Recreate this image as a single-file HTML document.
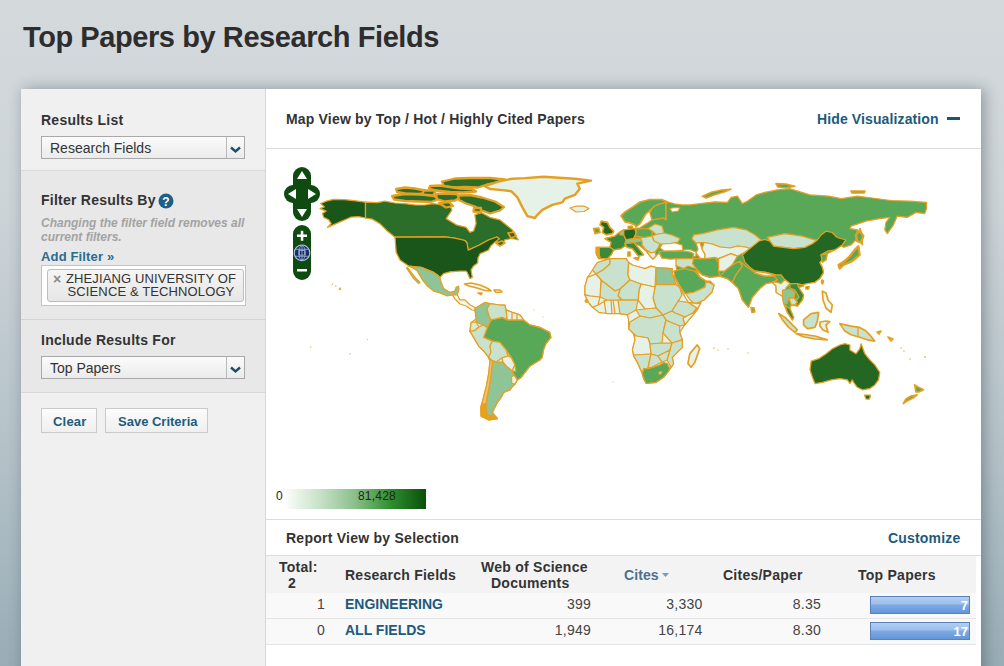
<!DOCTYPE html>
<html><head><meta charset="utf-8">
<style>
*{margin:0;padding:0;box-sizing:border-box}
html,body{width:1004px;height:666px;overflow:hidden}
body{font-family:"Liberation Sans",sans-serif;background:linear-gradient(to bottom,#d4d9dc 0px,#cdd4d8 200px,#b4c2c8 450px,#99adb6 666px);position:relative;color:#333}
.t{position:absolute;white-space:nowrap;line-height:1;margin-top:-1px}
h1{position:absolute;left:23px;top:19px;font-size:29px;letter-spacing:-0.42px;font-weight:bold;color:#2d2d2d;white-space:nowrap;line-height:36px}
#side{position:absolute;left:21px;top:89px;width:245px;height:600px;background:#f0f0f0;border-right:1px solid #d6d6d6}
#shadow{position:absolute;left:21px;top:89px;width:960px;height:620px;box-shadow:3px 0 14px rgba(30,45,55,0.38)}
#main{position:absolute;left:266px;top:89px;width:715px;height:600px;background:#fff}
.sec2{position:absolute;left:0;top:81px;width:244px;height:150px;background:#e8e8e8;border-top:1px solid #dadada}
.sec3{position:absolute;left:0;top:230px;width:244px;height:74px;background:#e8e8e8;border-top:1px solid #d4d4d4;border-bottom:1px solid #d8d8d8}
.lbl{font-size:14px;font-weight:bold;color:#333;letter-spacing:0.25px}
.sel{position:absolute;left:20px;width:204px;height:23px;border:1px solid #a9a9a9;background:linear-gradient(#fbfbfb,#ebebeb);font-size:14px;color:#333}
.sel span{position:absolute;left:8px;top:4px;line-height:1}
.sel i{position:absolute;right:0;top:0;width:18px;height:21px;border-left:1px solid #b9b9b9}
.btn{position:absolute;height:25px;border:1px solid #cacaca;background:linear-gradient(#fcfcfc,#efefef);font-size:13px;letter-spacing:0.2px;color:#1f5c7e;font-weight:bold}
.btn span{position:absolute;top:6px;line-height:1}
.blue{color:#1d5a7c}
.hr{position:absolute;left:0;width:715px;height:1px;background:#dcdcdc}
.num{font-size:14px;color:#444;letter-spacing:0.25px}
.fld{font-size:14px;font-weight:bold;color:#1d5a7c;letter-spacing:0}
svg#map{position:absolute;left:0;top:0}
#map path{stroke:#e6a021;stroke-width:1.25;stroke-linejoin:round}
#map path.thick{stroke-width:1.7}
#map path.arc{stroke-width:2.3}
#map path.gl{stroke-width:2.4}
#map path.line{fill:none}
#map path.sea{fill:#fff}
#map path.or{fill:#e8a11a}
.c1{fill:#1a551a}.c2{fill:#236723}.c3{fill:#2a6e2a}.c4{fill:#3b8a3b}.c5{fill:#58a858}
.c6{fill:#8fc497}.c7{fill:#c9e2cd}.c8{fill:#d6eada}.c9{fill:#f2f8f0}.c10{fill:#e6f2e8}
.bar{position:absolute;left:604px;width:100px;height:18px;border:1px solid #5a80b6;background:linear-gradient(#b2cef2 0%,#9ec0ec 42%,#7ea9e3 52%,#6396da 100%);color:#fff;font-size:13px;font-weight:bold;text-align:right;padding-right:1px;line-height:17px}
</style></head><body>
<h1>Top Papers by Research Fields</h1>
<div id="shadow"></div>
<div id="side">
  <div class="t lbl" style="left:20px;top:25px">Results List</div>
  <div class="sel" style="top:47px"><span>Research Fields</span><i><svg width="18" height="21" style="position:absolute;left:-1px;top:0"><path d="M5 10.5 L9.5 14.5 L14 10.5" stroke="#1b5068" stroke-width="2.4" fill="none"/></svg></i></div>
  <div class="sec2">
    <div class="t lbl" style="left:20px;top:23px">Filter Results By</div>
    <svg style="position:absolute;left:137px;top:22px" width="16" height="16"><circle cx="8" cy="8" r="7.5" fill="#1d5f86"/><text x="8" y="12.5" text-anchor="middle" font-family="Liberation Sans" font-weight="bold" font-size="12" fill="#fff">?</text></svg>
    <div class="t" style="left:20px;top:46px;font-size:12px;font-style:italic;font-weight:bold;color:#a3a3a3;line-height:14px">Changing the filter field removes all<br>current filters.</div>
    <div class="t" style="left:20px;top:80px;font-size:13px;font-weight:bold;color:#2a6d90;letter-spacing:0.15px">Add Filter »</div>
    <div style="position:absolute;left:20px;top:94px;width:205px;height:41px;background:#fff;border:1px solid #c4c4c4"></div>
    <div style="position:absolute;left:26px;top:98px;width:197px;height:33px;background:linear-gradient(#f5f5f5,#e6e6e6);border:1px solid #bdbdbd;border-radius:3px"></div>
    <div class="t" style="left:32px;top:102px;font-size:14px;font-weight:bold;color:#8a8a8a">×</div>
    <div class="t" style="left:45px;top:102px;font-size:13px;color:#333;line-height:13px;text-align:center;letter-spacing:0.12px">ZHEJIANG UNIVERSITY OF<br>SCIENCE &amp; TECHNOLOGY</div>
  </div>
  <div class="sec3">
    <div class="t lbl" style="left:20px;top:14px">Include Results For</div>
    <div class="sel" style="top:36px"><span>Top Papers</span><i><svg width="18" height="21" style="position:absolute;left:-1px;top:0"><path d="M5 10.5 L9.5 14.5 L14 10.5" stroke="#1b5068" stroke-width="2.4" fill="none"/></svg></i></div>
  </div>
  <div class="btn" style="left:20px;top:319px;width:56px"><span style="left:11px">Clear</span></div>
  <div class="btn" style="left:84px;top:319px;width:103px"><span style="left:12px;letter-spacing:0">Save Criteria</span></div>
</div>
<div id="main">
  <div class="t lbl" style="left:20px;top:24px;letter-spacing:0.18px">Map View by Top / Hot / Highly Cited Papers</div>
  <div class="t lbl blue" style="left:551px;top:24px;letter-spacing:0.12px">Hide Visualization</div>
  <div style="position:absolute;left:681px;top:28px;width:13px;height:3px;background:#1a5577"></div>
  <div class="hr" style="top:59px"></div>
  <div class="hr" style="top:430px"></div>
  <div class="t lbl" style="left:20px;top:443px">Report View by Selection</div>
  <div class="t lbl blue" style="left:622px;top:443px;letter-spacing:0.18px">Customize</div>
  <div class="hr" style="top:466px"></div>
  <div style="position:absolute;left:0;top:467px;width:710px;height:37px;background:#f3f3f3"></div>
  <div style="position:absolute;left:0;top:504px;width:710px;height:51px;background:#f9f9f9"></div>
  <div style="position:absolute;left:0;top:529px;width:710px;height:1px;background:#e4e4e4"></div>
  <div style="position:absolute;left:0;top:555px;width:710px;height:1px;background:#e4e4e4"></div>
  <div class="t lbl" style="left:13px;top:472px">Total:</div><div class="t lbl" style="left:22px;top:488px">2</div>
  <div class="t lbl" style="left:79px;top:480px">Research Fields</div>
  <div class="t lbl" style="left:215px;top:472px">Web of Science</div><div class="t lbl" style="left:225px;top:488px">Documents</div>
  <div class="t lbl" style="left:358px;top:480px;color:#4d7091;letter-spacing:0.1px">Cites</div>
  <svg style="position:absolute;left:396px;top:484px" width="8" height="5"><path d="M0,0 L7,0 L3.5,4Z" fill="#6d9cc4"/></svg>
  <div class="t lbl" style="left:457px;top:480px">Cites/Paper</div>
  <div class="t lbl" style="left:592px;top:480px">Top Papers</div>
  <div class="t num" style="right:656px;top:509px">1</div>
  <div class="t fld" style="left:79px;top:509px">ENGINEERING</div>
  <div class="t num" style="right:390px;top:509px">399</div>
  <div class="t num" style="right:278.5px;top:509px">3,330</div>
  <div class="t num" style="right:160px;top:509px">8.35</div>
  <div class="bar" style="top:507px">7</div>
  <div class="t num" style="right:656px;top:535px">0</div>
  <div class="t fld" style="left:79px;top:535px">ALL FIELDS</div>
  <div class="t num" style="right:390px;top:535px">1,949</div>
  <div class="t num" style="right:278.5px;top:535px">16,174</div>
  <div class="t num" style="right:160px;top:535px">8.30</div>
  <div class="bar" style="top:533px">17</div>
  <!-- legend -->
  <div class="t" style="left:10px;top:402px;font-size:12px;color:#222">0</div>
  <div style="position:absolute;left:17px;top:400px;width:143px;height:20px;background:linear-gradient(to right,#ffffff 0%,#c9e2c9 25%,#8cc08c 50%,#2f8f2f 75%,#0a500a 100%)"></div>
  <div class="t" style="left:92px;top:402px;font-size:12px;color:#222;letter-spacing:0.2px">81,428</div>
</div>
<svg id="map" width="1004" height="666" viewBox="0 0 1004 666">
<!-- Alaska -->
<path class="c1" d="M320.6,203.6 L326.2,201.2 333.7,199.3 344.9,199.7 356.1,200.9 365.5,202.2 365.5,218 358.6,216.7 351.1,217.1 346.2,219.2 341.8,221.1 336.2,223.6 327.5,227.3 331.2,223.6 328.7,219.8 323.7,217.4 322.5,213.6 326.2,211.1 320,208.6 324.3,206.8Z"/>
<!-- Canada -->
<path class="c3" d="M365.5,202.2 L377.3,202.7 384.8,201.2 394.8,203 404.7,203.6 414.7,204.9 425,205 432.5,203.6 443.7,204.9 449.9,206.1 452,210 446.2,218.6 456.2,224.8 466.1,227.3 469.9,232.3 473.6,231 476.1,223.6 474.9,214.9 481.1,212.4 489.8,217.3 499.8,219.8 506,224.8 512.2,229.8 514.7,234.8 518.5,239.8 512.2,238.5 504.8,239.8 502.3,244.8 494.8,240.5 499.2,238.8 496.8,237 488.5,240 478.9,245.3 468.2,250.1 467,243 465,240.5 454.8,238.1 444.8,236.9 395,237.2 387.3,231 379.8,223.6 372.3,219.2 365.5,218Z"/>
<!-- Baffin & arctic islands -->
<path class="c3 arc" d="M442,181.5 L455,178.5 470,178 490,178 505,179.5 498,182.5 487,184.5 478,187.5 465,187 455,187.5 444,186.5Z"/>
<path class="c3 arc" d="M430,186 L440,185.5 450,187 460,188.5 472,189 476,191.5 463,192.5 450,192 436,190.5 429,188.5Z"/>
<path class="c3 arc" d="M396,189 L405,187.5 415,188.5 425,190.5 429,193 418,194 405,193.5 397,192Z"/>
<path class="c3 arc" d="M392,196 L405,194 420,194.5 433,195.5 439,199 431,202 418,201.5 405,201 394,199.5Z"/>
<path class="c3 arc" d="M436,194 L445,193.5 456,194 461,197 455,200.5 445,201.5 437,199Z"/>
<path class="c3 arc" d="M458,195.5 L470,195 482,197.5 495,201.5 504,207 500,210.5 490,213.5 482,210.5 475,206.5 466,203.5 459,200Z"/>
<path class="c3 arc" d="M474,208 L481,208 480.5,212.5 473.5,211.5Z"/>
<path class="c3 arc" d="M439,203 L449,202 453,206 446,207.5Z"/>
<path class="c3 arc" d="M424,190.5 L436,190.5 433,195.5 422,194.5Z"/>
<!-- US -->
<path class="c1" d="M395,237.2 L444.8,236.9 454.8,238.1 465,240.5 467,243 468.2,250.1 478.9,245.3 488.5,240 496.8,237 499.2,238.8 494,243 490.9,245.9 488.5,250.1 483,252.5 480.1,253.7 478,258 477.7,263 473.5,266.1 471,269.9 472.3,277.4 469.8,278.6 467.3,272.4 466,271.1 459.8,271.1 449.8,271.8 443.6,273.6 439.9,277.4 437.4,274.9 433.6,272.4 427.4,269.9 421.2,267.4 408.7,266.1 405,263.6 400,259.9 396.2,252.4 395.6,245Z"/>
<!-- Nova Scotia / Newfoundland -->
<path class="c3 thick" d="M496,243 L502,241 505,243 500,246Z"/>
<path class="c3 thick" d="M508,233 L514,232 516,236 511,238Z"/>
<!-- Mexico -->
<path class="c6" d="M408.7,266.1 L421.2,267.4 427.4,269.9 433.6,272.4 437.4,274.9 439.9,277.4 441.1,282.3 443.6,288.6 449.8,292.3 454.8,291.1 456.1,287.3 458.5,286.1 459,289 457.3,294.8 452.3,294.8 447.3,296 439.9,292.9 433.6,291.1 427.4,286.1 422.4,279.9 417.4,271.1 412,267.5Z"/>
<path class="c6" d="M407.4,267.4 L411.2,272.4 416.2,278.6 420,282.3 418.7,283.6 413.7,278.6 408.7,271.1 406.5,268Z"/>
<!-- Central America -->
<path class="c9" d="M452.3,294.8 L457.3,294.8 459.8,299.8 464.8,299.8 469.8,304.8 477.2,308.8 479.7,307.3 478,311 472,310 466,306 460,304 455,299Z"/>
<!-- Cuba, Hispaniola -->
<path class="c9 thick" d="M464.5,284 L471,283 480,285 488,288.5 491,291 485,290.5 477,288 469,286Z"/>
<path class="c9 thick" d="M494,290 L500,290 502,292 496,292.5Z"/>
<path class="c9 thick" d="M478,293 L482,293 481,294.5Z"/>
<!-- Greenland -->
<path class="c10 gl" d="M484.8,186.2 L499.8,181.2 512.2,178.7 524.9,178.1 543.6,176.8 574.8,178.7 591,180.6 577.3,183.7 579.8,188.7 574.8,194.9 564.8,198.6 562.3,202.4 552.3,204.9 542.4,209.9 537.4,214.8 534.9,218 527.4,216.1 522.4,207.4 517.4,197.4 511.2,191.2 500,189.9 490,189Z"/>
<!-- Iceland -->
<path class="c10" d="M570,208 L576,206 584,206 589,208.5 584,211.5 576,212Z"/>

<!-- South America -->
<path class="c8" d="M478.7,306.2 L484.9,302.5 489.9,303.7 499.9,305 504.8,305 506.1,309.9 512.3,312.4 519.8,314.9 523.5,319.9 529.8,324.9 539.7,327.4 549.7,332.4 550.9,337.4 546,343.6 543.5,349.8 542.2,357.3 539.8,360 529.8,366.2 526,371.2 521.1,377.4 517.3,379.9 514.8,384.3 511.7,387.4 509.9,389.9 503.6,392.4 501.1,397.4 497.4,402.4 494.9,407.3 492.4,412.3 497.4,418.6 488.7,419.8 481.2,416.1 481,407.3 483.5,397.4 486.4,386.2 488.7,373.7 490,361.2 488.6,357.3 484.9,352.3 478.7,346.1 473.7,337.4 469.9,331.1 471.2,322.4 476.2,318.7 474.9,308.7Z"/>
<path class="c5" d="M491.1,319.9 L502.3,317.4 507.3,319.9 519.8,319.9 523.5,319.9 529.8,324.9 539.7,327.4 549.7,332.4 550.9,337.4 546,343.6 543.5,349.8 542.2,357.3 539.8,360 529.8,366.2 526,371.2 521.1,377.4 517.3,379.9 514,375 512,371 516,371 514.8,364.8 511.1,357.3 506.1,349.8 499.9,342.3 492.4,341.1 483.6,337.4 487.4,327.4Z"/>
<path class="c6" d="M474.9,308.7 L478.7,306.2 484.9,302.5 489.9,303.7 487,309 489,316 491.1,319.9 487.4,327.4 483,325 476,322 476.2,318.7Z"/>
<path class="c7" d="M489.9,303.7 L499.9,305 504.8,305 506.1,309.9 507.3,319.9 502.3,317.4 491.1,319.9 489,316 487,309Z"/>
<path class="c10" d="M506.1,309.9 L512.3,312.4 519.8,314.9 523.5,319.9 507.3,319.9Z"/>
<path class="line" d="M512,313 L512,320 M517,314.5 L517,320"/>
<path class="c8" d="M471.2,322.4 L476,322 479,327 474,331 469.9,331.1Z"/>
<path class="c7" d="M469.9,331.1 L474,331 479,327 483,325 487.4,327.4 483.6,337.4 492.4,341.1 490,346 491,352 488.6,357.3 484.9,352.3 478.7,346.1 473.7,337.4Z"/>
<path class="c7" d="M492.4,341.1 L499.9,342.3 506.1,349.8 508,356 502,358 496,362 491,360 488.6,357.3 491,352 490,346Z"/>
<path class="c10" d="M502,358 L508,356 511.1,357.3 514.8,364.8 512,371 506,366 503,362Z"/>
<path class="c6" d="M491,360 L496,362 503,362 506,366 512,371 514,375 517.3,379.9 514.8,384.3 511.7,387.4 509.9,389.9 503.6,392.4 501.1,397.4 497.4,402.4 494.9,407.3 492.4,412.3 494,416 487,415 485.5,407.3 486.8,398.6 489.3,386.2 491.2,373.7 492.5,361Z"/>
<path class="c10" d="M511.5,377 L514,375 517.3,379.9 514.8,384.3 511.7,383Z"/>
<path class="c9" style="fill:#edc46e" d="M488.6,357.3 L491,360 492.5,361 491.2,373.7 489.3,386.2 486.8,398.6 485.5,407.3 487,415 494,416 497.4,418.6 488.7,419.8 481.2,416.1 481,407.3 483.5,397.4 486.4,386.2 488.7,373.7 490,361.2Z"/>
<path class="or" d="M481.5,404 L485.8,404 485.5,407.3 487,415 494,416 497.4,418.6 488.7,419.8 481.2,416.1 481,407.3Z"/>

<!-- Eurasia base (Russia colour) -->
<path class="c5" d="M596.2,247.3 L596.2,253.6 598.7,258.6 607.4,258.6 611.2,254.8 613.7,249.8 621.1,248.6 624.9,246.1 627.4,247.3 632.4,248.6 638.6,256.1 643.6,254.8 639.8,249.8 634,243.5 640,246 646,251 650,256 653,259 656,256 659,253 662,258 670,259 678,258.5 689.9,258.5 686,261 681,263 676,265.5 677,272 684.7,286.2 691,297.4 695,304 704,300 712,292 714,285 710,281 706,281 700,277 696,270 702.4,274.9 709.9,277.4 719.8,276.1 727.3,278.6 732.3,282.4 734.8,284.9 738.5,288.6 742.3,299.8 748.5,307.3 752.2,297.3 759.7,288.6 765.9,283.6 772.2,282.4 776,286 776.2,292.5 782.5,296.2 783.7,303.7 787.4,312.4 792.4,319.9 793.7,317.4 789.9,308.7 791.2,304.9 797.4,306.2 802.4,299.9 803.6,295 798.7,287.5 803.6,286.2 804.9,281.2 814.8,282.3 819.8,278.6 823.5,272.4 822.3,267.4 819.8,262.4 823.5,258.6 821,254.9 826,259.9 827.2,253.7 834.7,249.9 842.2,244.9 841.2,246 843.6,247.3 851.1,244.8 856.1,239.8 857.4,229.8 849.9,228.6 851.1,226.1 866.1,221.1 879.8,218.6 889.8,217.4 886,222.3 884.8,229.8 887.3,233.6 893.5,224.8 897.2,216.1 907.2,217.4 915.9,212.4 924.7,213.6 926.5,208.6 926.5,202.4 909.7,201.2 891,200.5 872.3,198 857.4,196.2 841.2,198.7 828.7,196.2 810,194.9 789.7,188.7 777.2,189.9 764.8,192.4 756.1,194.9 747.3,201.2 742.3,203.6 737.4,196.2 731.1,197.4 727.4,202.4 714.9,201.8 700,203.6 690,204.9 681.7,204.9 674.7,203.9 667.8,202 665.8,202.5 665.8,219.9 663.8,217.9 657.8,218.9 651.8,219.9 647.8,222.9 639.9,227.9 636,228 634.9,228.6 623.6,229.9 620,232 614.9,236.1 605,238.6 611.2,242.4 609.9,247.3 606.2,247.3Z"/>
<!-- Novaya Zemlya, Severnaya Zemlya, Wrangel -->
<path class="c5 thick" d="M702.5,196.2 L712,192 722,190 731,189.3 724,192 714,195 706,198Z"/>
<path class="c5 thick" d="M776,183.7 L786,184 794.7,186.2 786,188 778,187Z"/>
<path class="c5 thick" d="M851,191 L865,191 864,193 852,193Z"/>
<!-- Sakhalin -->
<path class="c5 thick" d="M859.9,228.6 L861.5,234 862.3,244.8 860.5,240 859.5,233Z"/>
<!-- Seas -->
<path class="sea" d="M662,244 L672,242 682,245 683,250 675,251 664,251 660,248Z"/>
<path class="sea" d="M696,243 L700,242.5 702,249 705,254 704.9,258.7 700,258 696,253 698,249Z"/>
<path class="sea" d="M670,208.5 L675,207.5 680,208 678,211 672,212Z"/>
<path class="c5 thick" d="M621,215.9 L625,211.9 632.9,206.9 639.9,202 649.8,199.5 661.8,199.5 667.8,202 665.8,202.5 660,204 654.8,206 651.8,208.9 645.9,213.9 642.9,218.9 639.9,223.9 635.9,226.9 634.9,224.9 630,222.9 625,221.9Z"/>
<path class="c5" d="M651.8,208.9 L654.8,206 660,204 665.8,202.5 665.8,219.9 663.8,217.9 657.8,218.9 651.8,219.9 650.8,215.9 649.8,212.9Z"/>
<path class="c5 thick" d="M628,226.5 L632,226 633,229 629,229.5Z"/>
<!-- UK & Ireland -->
<path class="c2 thick" d="M601.2,221.2 L607.4,222.4 609.9,227.4 613.7,231.1 612.4,233.6 606.2,234.9 602.4,232.4 603.7,227.4 600,224.9Z"/>
<path class="c5 thick" d="M593.7,228.6 L598.7,228 600,232.4 595,233.6Z"/>
<!-- France, Spain, Portugal, Germany, Italy -->
<path class="c4" d="M605,238.6 L614.9,236.1 620,232 623.6,233.6 626.1,239.9 624.9,246.1 621.1,248.6 613.7,249.8 609.9,247.3 611.2,242.4Z"/>
<path class="c4" d="M599,247.3 L606.2,247.3 609.9,247.3 613.7,249.8 611.2,254.8 607.4,258.6 600,258.6 599,253Z"/>
<path class="or" d="M596.2,247.3 L599,247.3 599,253 600,258.6 598.7,258.6 596.2,253.6Z"/>
<path class="c2" d="M623.6,229.9 L634.9,228.6 636.1,233.6 633.6,238.6 626.1,239.9 623.6,234.9Z"/>
<path class="c4" d="M624.9,243.6 L633.6,242.4 639.8,249.8 643.6,254.8 638.6,256.1 632.4,248.6 627.4,247.3Z"/>
<path class="c4 thick" d="M628,252 L630,252 630,256 628,256Z"/>
<path class="c4 thick" d="M634,258 L639,257.5 638,260Z"/>
<!-- Benelux / Switzerland/Austria/Czech -->
<path class="c6" d="M620,232 L623.6,229.9 623.6,234.9 620,235Z"/>
<path class="c6" d="M626.1,239.9 L633.6,238.6 640,238 642,241 633.6,242.4 624.9,243.6Z"/>
<!-- Poland / Baltics -->
<path class="c5" d="M636.1,229 L648,228.5 652.3,231 652,236 645,237.5 636.1,236 633.6,238.6 636.1,233.6Z"/>
<!-- Belarus, Ukraine, Balkans -->
<path class="c7" d="M648,228.5 L655,224 662,226 664,233 656,234.5 652.3,231Z"/>
<path class="c7" d="M652,236 L656,234.5 664,233 672,235 680,238.6 678,242 670,243.6 660,244 654,241Z"/>
<path class="c7" d="M640,238 L645,237.5 652,236 654,241 660,244 658,248 655,252 651,253 646,250 642,245 642,241Z"/>
<path class="c10" d="M646,250 L651,253 655,252 656,256 653,259 650,256Z"/>
<!-- Caucasus -->
<path class="c9" d="M683,250 L690,249.5 696,252 696,256 690,257.4 684,253Z"/>
<!-- Turkey & Middle East -->
<path class="c5" d="M659,251.5 L670,251 682,251 690,252 693.7,253.7 692.4,258.7 689.9,258.5 678,258.5 670,259 662,258Z"/>
<path class="c7" d="M676,259 L689.9,258.5 693.7,258.7 696.2,268.6 694,268 688,266 683.7,268.6 676,265.5Z"/>
<path class="c5" d="M673.7,271.1 L683.7,268.6 694.9,271.1 699.9,277.4 706.1,281.1 704.9,287.3 693.7,292.3 684.9,293.6 680,286.1 675,277.4Z"/>
<path class="c7" d="M684.9,293.6 L693.7,292.3 704.9,287.3 706.1,281.1 712,284 714,285 712,292 704,300 695,304 690,300 686,294Z"/>
<path class="c5" d="M693.7,258.7 L704.9,258.7 714.9,257.4 718.6,262.4 718.6,271.1 719.8,276.1 709.9,277.4 702.4,274.9 696.2,268.6 692.4,263.6Z"/>
<!-- Central Asia -->
<path class="c7" d="M693.7,234.8 L702.5,233.6 717.4,229.8 733.6,227.3 746.1,229.8 754.8,234.8 761,239.8 759.8,247.3 752,249 745,247 738,246 730,248 720,247 712,244 704,242.5 700,242.5 696,243 692,239Z"/>
<path class="c10" d="M704,242.5 L712,244 720,247 730,248 738,246 745,247 752,249 751.2,247.4 745,252 737.3,256.2 731.1,253.7 718.6,258.7 714.9,257.4 704.9,258.7 705,254 702,249Z"/>
<path class="c10" d="M718.6,258.7 L731.1,253.7 737.3,256.2 732.3,264.9 724.8,271.1 718.6,271.1 718.6,262.4Z"/>
<path class="c5" d="M719.8,276.1 L724.8,271.1 732.3,264.9 739.8,261.2 742.3,266.2 736,274.9 732.3,282.4 727.3,278.6Z"/>
<!-- India -->
<path class="c5" d="M739.8,261.2 L746,266.2 754.7,272.4 764.7,274.9 773.4,274.9 777.2,279.9 772.2,282.4 765.9,283.6 759.7,288.6 752.2,297.3 748.5,307.3 742.3,299.8 738.5,288.6 734.8,284.9 732.3,282.4 736,274.9 742.3,266.2Z"/>
<path class="c5 thick" d="M751,307.5 L754,308 754.7,312 752,312.5Z"/>
<!-- Mongolia -->
<path class="c7" d="M767.4,237.3 L784.7,233.6 802.2,236.1 814.6,239.8 817.3,240 812.3,243.7 804.8,247.4 793.6,248.7 783.6,247.4 773.6,246.2 769.9,241.2Z"/>
<!-- China -->
<path class="c2" d="M742.5,254.9 L751.2,247.4 758.7,241.2 764.9,239.3 769.9,241.2 773.6,246.2 783.6,247.4 793.6,248.7 804.8,247.4 812.3,243.7 817.3,240 821,235 826,231.2 832.2,232.5 837.2,237.5 845.9,240 842.2,244.9 834.7,249.9 827.2,251.2 821,254.9 823.5,258.6 819.8,262.4 822.3,267.4 823.5,272.4 819.8,278.6 814.8,282.3 807.3,283.6 802.3,284.8 797.3,283.6 789.9,283.6 784.9,279.8 781.1,274.9 774.9,274.9 764.9,272.4 755,271.1 750,267.4 745,262.4Z"/>
<path class="c2 thick" d="M806,287 L809,286.5 808.5,289 806,289Z"/>
<!-- Korea, Japan, Taiwan -->
<path class="c5" d="M821,254.9 L827.2,253.7 826,259.9 822.3,262.4Z"/>
<path class="c5 arc" d="M859.6,230.5 L863.4,236.2 860.9,242.5 857.2,241.2 855.9,235Z"/>
<path class="c5 arc" d="M858.4,246.2 L859.6,254.9 852.2,261.1 843.4,264.9 839.7,268.6 838.5,264.9 844.7,261.1 849.7,256.2 854.7,249.9Z"/>
<path class="c5 thick" d="M822,280 L823.5,281 822.5,284 821.5,282Z"/>
<!-- SE Asia mainland -->
<path class="c10" d="M772.2,282.4 L776,282 781,283.6 784.9,279.8 789.9,283.6 786,288 784,294 782.5,296.2 776.2,292.5 776,286Z"/>
<path class="c6" d="M782.5,290 L790,289 795,292 794,298 789,298 787,303.7 783.7,303.7 782.5,296.2Z"/>
<path class="c4" d="M789.9,283.6 L797.3,283.6 798.7,287.5 803.6,295 802.4,299.9 797.4,306.2 795,302 799,297 795,290 790,288Z"/>
<path class="c7" d="M789,298 L794,298 797.4,302 795,304.9 791.2,304.9Z"/>
<path class="c4" d="M785,305 L789.9,308.7 793.7,317.4 792.4,319.9 787.4,312.4Z"/>
<!-- Indonesia etc -->
<path class="c7 thick" d="M778.7,313.6 L785,317.4 792.4,324.9 797.4,329.9 794.9,332.3 788.7,327.4 782.5,319.9Z"/>
<path class="c7 thick" d="M796.2,333.6 L805,334.5 815,336 827.3,339.8 815,339 804,337Z"/>
<path class="c7 thick" d="M803.6,319.9 L811.1,313.6 818.6,312.4 817.4,321.1 814.9,327.4 807.4,328.6 803.6,324.9Z"/>
<path class="c10 thick" d="M820,322 L826,321 829.8,321.5 826,325 828,332.3 823,330 819.9,326Z"/>
<path class="c9 thick" d="M822.3,291.2 L826,293 828,300 832.3,305 831,312.4 826,308 823,300Z"/>
<path class="c7 thick" d="M839.8,323.6 L851,326.1 859.7,327.4 866,331.1 869.7,334.8 874.7,341.1 867.2,339.8 859.7,337.3 851,334.8 844.8,331.1Z"/>
<path class="line" d="M858,327 L858,337"/>
<path class="c9 thick" d="M877,332 L881,331 879,334Z"/>
<path class="c9 thick" d="M888,337 L893,339 891,341Z"/>
<!-- Australia -->
<path class="c2" d="M811.2,361.2 L818.7,358.7 826.2,353.7 832.4,348.7 839.9,345 844.9,343.7 849.9,345 849.9,350 856.1,353.7 859.8,348.7 861.1,343.7 864.8,353.7 869.8,359.9 874.8,364.9 879.8,372.4 878.5,379.9 874.8,384.9 869.8,388.6 862.3,389.8 857.3,387.3 853.6,382.4 852.3,379.9 849.9,383.6 847.4,379.9 839.9,378.6 831.2,379.9 822.4,382.4 815,383.6 812.5,377.4 810,369.9Z"/>
<path class="c2" d="M864.5,395 L870.5,395 869.5,399 866,399Z"/>
<path class="c5 thick" d="M914.7,384.9 L918,387 923.4,389.8 919,392 916,392Z"/>
<path class="c5 thick" d="M917.1,394.8 L913,398 907,401 903.4,403.5 906,399 911,396Z"/>

<!-- Nepal / Himalaya strip -->
<path class="c9 thick" d="M755,271.1 L764.9,272.4 774.9,274.9 773.4,276 764.7,276 754.7,273Z"/>
<!-- Sri Lanka thick -->
<!-- Pacific islands -->
<g fill="#e6a021" opacity="0.8">
<circle cx="332.4" cy="284.2" r="0.8"/><circle cx="335.8" cy="286" r="0.8"/><circle cx="339.9" cy="288.9" r="1.3"/>
<circle cx="310.8" cy="347" r="0.7"/><circle cx="350" cy="353.8" r="0.7"/><circle cx="367.6" cy="339.6" r="0.6"/>
<circle cx="901" cy="348" r="0.8"/><circle cx="904" cy="351" r="0.8"/><circle cx="925" cy="357" r="0.9"/><circle cx="910" cy="359" r="0.8"/>
<circle cx="613" cy="382" r="0.6"/><circle cx="638" cy="296" r="0.6"/><circle cx="714" cy="348" r="0.8"/><circle cx="718" cy="350" r="0.7"/>
<circle cx="728" cy="349" r="0.7"/><circle cx="748" cy="353" r="0.7"/><circle cx="534" cy="310" r="0.6"/><circle cx="543" cy="317" r="0.6"/>
</g>

<!-- Africa -->
<path class="c10" d="M597.5,262.5 L609.9,258.7 626.1,258.7 628.6,262.5 632.4,265 641.1,267.5 644.8,268.7 651.1,266.2 656,267.5 672.2,268.7 672.2,273.7 679.7,287.4 686,298.6 688.4,302.4 697.2,303.6 700.9,302.4 697.2,309.8 690.9,317.3 684.7,324.8 679.7,332.3 682.3,339.9 682.3,347.4 677.3,352.4 672.3,357.4 673.6,363.6 671.1,367.3 668.6,371.1 663.6,377.3 656.1,382.3 646.2,383.5 643.7,378.6 641.2,371.1 637.4,362.4 633.7,356.1 632.4,349.9 635,339.9 633.7,333.7 628.7,328.7 628.6,319.8 627.4,314.8 619.9,313.6 607.4,313.6 598.7,312.3 592.5,307.3 587.5,301.1 585,294.9 585,286.2 587.5,277.4 592.5,270Z"/>
<path class="c7" d="M597.5,262.5 L609.9,258.7 610,264 603,270 596,274 592.5,270Z"/>
<path class="c7" d="M609.9,258.7 L626.1,258.7 628.6,262.5 628,275 630,280 620,289 615,291 601,280 596,274 603,270 610,264Z"/>
<path class="c10" d="M628.6,262.5 L632.4,265 641.1,267.5 644.8,268.7 651.1,266.2 656,267.5 655,287 641,284 630,280 628,275Z"/>
<path class="c6" d="M656,267.5 L672.2,268.7 672.2,273.7 676,284.5 656,284.5Z"/>
<path class="c7" d="M656,284.5 L676,284.5 679.7,287.4 682,295 679,300 672,311 663,315 656,308 653,298 655,287Z"/>
<path class="c10" d="M641,284 L655,287 653,298 656,308 645,309 638,300 639,290Z"/>
<path class="c7" d="M620,289 L630,280 641,284 639,290 638,300 622,300 618,296Z"/>
<path class="c7" d="M601,280 L615,291 620,289 618,296 622,300 607,300 600,297Z"/>
<path class="c10" d="M587.5,277.4 L596,274 601,280 600,297 590,296 585,294.9 585,286.2Z"/>
<path class="c10" d="M585,294.9 L590,296 600,297 598,305 592.5,307.3 587.5,301.1Z"/>
<path class="c7" d="M618,300 L638,300 636,310 627.4,314.8 619.9,313.6Z"/>
<path class="line" d="M598,305 L607,300 M604,300 L606,313 M611,300 L612,313.6 M613,300 L615,313.6"/>
<path class="c7" d="M678,301 L688.4,302.4 697,308 693,313 685,317 675,313 672,311 679,300Z"/>
<path class="c10" d="M688.4,302.4 L697.2,303.6 700.9,302.4 697.2,309.8 690.9,317.3 684.7,324.8 683,318 693,313 697,308Z"/>
<path class="c7" d="M636,310 L645,309 656,308 663,315 650,318 640,316Z"/>
<path class="c7" d="M640,316 L650,318 663,315 666,320 663,333 662,343 650,344 648,338 636,336 633.7,333.7 628.7,328.7 630,322Z"/>
<path class="c7" d="M672,311 L675,313 685,317 683,318 684.7,324.8 679.7,326 670,322 666,320 663,315Z"/>
<path class="c7" d="M666,320 L670,322 679.7,326 679.7,332.3 682.3,339.9 672,343 663,333Z"/>
<path class="c10" d="M633.7,333.7 L636,336 648,338 650,344 651,354 633.7,355 632.4,349.9 635,339.9Z"/>
<path class="c7" d="M650,344 L662,343 672,343 670,350 658,356 651,354Z"/>
<path class="c7" d="M672,343 L682.3,339.9 682.3,347.4 677.3,352.4 672.3,357.4 673.6,363.6 671.1,367.3 667,360 670,350Z"/>
<path class="c7" d="M633.7,355 L651,354 648,368 644,371 641.2,371.1 637.4,362.4 633.7,356.1Z"/>
<path class="c7" d="M651,354 L658,356 662,362 652,367 648,368Z"/>
<path class="c7" d="M658,356 L670,350 667,360 662,362Z"/>
<path class="c5" d="M643.7,368.6 L648.6,368.6 652.4,367.3 659.9,364.8 663.6,362.4 667.3,363.6 669.8,368.6 668.6,371.1 663.6,377.3 656.1,382.3 646.2,383.5 643.7,378.6 642.4,373.6Z"/>
<path class="c10" d="M659,372 L662,371.5 661,374 659,374Z"/>
<path class="c10 thick" d="M697.3,344.9 L699.7,348.6 694.8,362.4 691,367.3 687.9,363.6 689.8,353.6Z"/>
<circle cx="586.5" cy="301" r="2" fill="#e8a11a"/>

</svg>
<svg id="ctrl" width="1004" height="666" style="position:absolute;left:0;top:0">
<!-- pan control -->
<g fill="#0f4a10">
  <rect x="293" y="167" width="18" height="54" rx="9"/>
  <rect x="284" y="185" width="36" height="18" rx="9"/>
  <rect x="293" y="225" width="18" height="55" rx="9"/>
</g>
<g fill="#fff">
  <path d="M302,171 L307,179 L297,179Z"/>
  <path d="M302,217 L307,209 L297,209Z"/>
  <path d="M288,194 L296,189 L296,199Z"/>
  <path d="M316,194 L308,189 L308,199Z"/>
  <rect x="297" y="234.5" width="10" height="2.5"/><rect x="300.8" y="230.8" width="2.5" height="10"/>
  <rect x="297" y="269" width="10" height="2.5"/>
</g>
<circle cx="302" cy="252.8" r="7.8" fill="#1b2f5e" stroke="#b4c6ea" stroke-width="1.1"/>
<g stroke="#9fb3e0" stroke-width="0.8" fill="none"><ellipse cx="302" cy="252.8" rx="3.4" ry="7.2"/><path d="M295.2,249.3 H308.8 M295.2,256.3 H308.8 M302,245.5 V260"/><rect x="299.5" y="250.5" width="5" height="4.6"/></g>
</svg>
</body></html>
